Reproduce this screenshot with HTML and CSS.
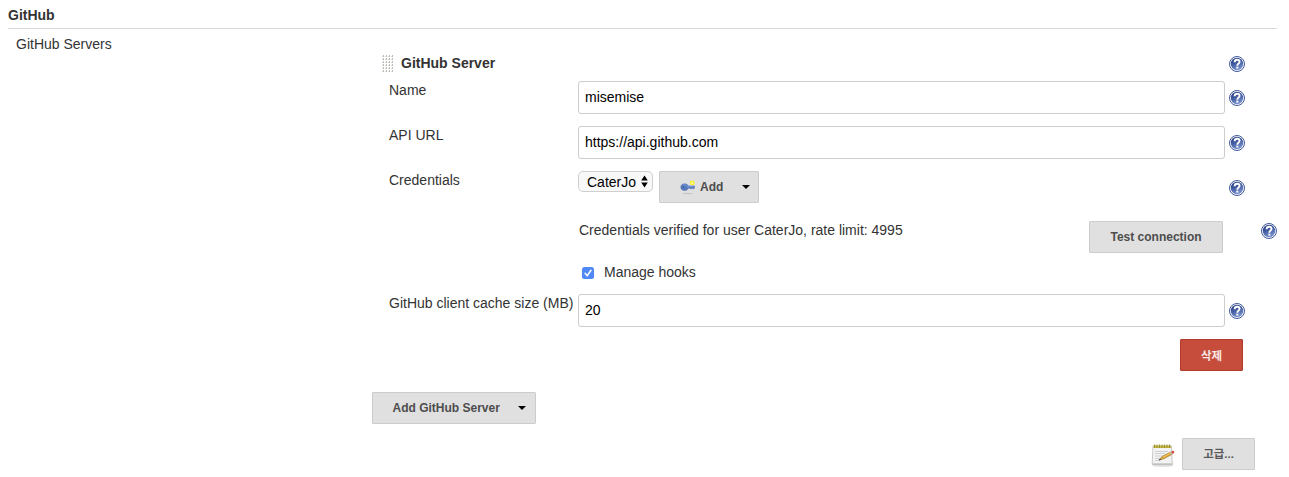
FILE: index.html
```
<!DOCTYPE html>
<html lang="ko">
<head>
<meta charset="utf-8">
<title>GitHub</title>
<link rel="stylesheet" href="styles.css">
</head>
<body>
<svg class="defs" aria-hidden="true">
  <defs>
    <linearGradient id="blue" x1="0" y1="0" x2="0.4" y2="1">
      <stop offset="0" stop-color="#243a7e"/><stop offset="0.5" stop-color="#3f5a9f"/><stop offset="1" stop-color="#7890cc"/>
    </linearGradient>
    <symbol id="help" viewBox="0 0 16 16">
      <circle cx="8" cy="8" r="7.5" fill="#fff" stroke="#40589b" stroke-width="1"/>
      <circle cx="8" cy="8" r="6.2" fill="url(#blue)"/>
      <path d="M5.600 6.200C5.700 4.400 6.700 3.700 8.100 3.700s2.500.8 2.500 2.100c0 1.700-2.300 1.800-2.300 3.900" fill="none" stroke="#fff" stroke-width="1.900"/>
      <rect x="7.300" y="10.600" width="2" height="2" fill="#fff"/>
    </symbol>
  </defs>
</svg>
<main class="page">
  <h1 class="section-title">GitHub</h1>
  <div class="section">
    <div class="section-label">GitHub Servers</div>
    <div class="content">
      <div class="server-head">
        <svg class="grip" viewBox="0 0 12 18">
          <defs><pattern id="dots" width="3" height="3" patternUnits="userSpaceOnUse"><rect y="1" width="2" height="1" fill="#d8d8d4"/><rect x="1" width="1" height="2" fill="#bdbcb6"/></pattern></defs>
          <rect width="12" height="17" fill="url(#dots)"/>
        </svg>
        <b class="server-name">GitHub Server</b>
        <svg class="help"><use href="#help"/></svg>
      </div>
      <div class="row">
        <label class="label">Name</label>
        <input class="text" value="misemise">
        <svg class="help"><use href="#help"/></svg>
      </div>
      <div class="row">
        <label class="label">API URL</label>
        <input class="text" value="https://api.github.com">
        <svg class="help"><use href="#help"/></svg>
      </div>
      <div class="row row-credentials">
        <label class="label">Credentials</label>
        <div class="controls">
          <div class="select">CaterJo
            <svg class="updown" viewBox="0 0 7 13"><path d="M3.500 0.500 6.800 5.500H.2zM.2 7.500h6.600L3.500 12.500z"/></svg>
          </div>
          <button class="button button-add">
            <svg class="key" viewBox="0 0 16 16">
              <ellipse cx="7.500" cy="13.500" rx="5.500" ry=".7" fill="#c8c8c8"/>
              <path d="M4.500 3.800c2 0 3.200.8 3.700 2.100h6.300v2.200l-1.300 1-1-.9-1.200.9-1-.9H8.200c-.5 1.500-1.800 2.300-3.700 2.300C2.200 10.500.8 9.200.8 7.200S2.200 3.800 4.500 3.800z" fill="#587bbf" stroke="#4c6cb0" stroke-width=".5"/>
              <path d="M3 5.200c1.500-.9 3.400-.5 4.200 1.500h6.300" fill="none" stroke="#7d9cd6" stroke-width=".9"/>
              <circle cx="3.200" cy="7.400" r=".8" fill="#3d5a98"/>
              <circle cx="12.300" cy="2.900" r="2.400" fill="#f8f02c"/><circle cx="12.300" cy="2.900" r="1" fill="#fffbb0"/>
            </svg>
            <span>Add</span><i class="caret"></i>
          </button>
        </div>
        <svg class="help"><use href="#help"/></svg>
      </div>
      <div class="row-test">
        <span class="status">Credentials verified for user CaterJo, rate limit: 4995</span>
        <button class="button button-test">Test connection</button>
        <svg class="help"><use href="#help"/></svg>
      </div>
      <div class="row-hooks">
        <svg class="check" viewBox="0 0 12 12"><rect width="12" height="12" rx="2.500" fill="#5089f7"/><path d="M3.100 6.300 5.200 8.700 9 3.300" fill="none" stroke="#fff" stroke-width="1.500" stroke-linecap="round"/></svg>
        <span>Manage hooks</span>
      </div>
      <div class="row">
        <label class="label">GitHub client cache size (MB)</label>
        <input class="text" value="20">
        <svg class="help"><use href="#help"/></svg>
      </div>
      <div class="row-delete"><button class="button button-delete">삭제</button></div>
      <div class="row-add"><button class="button button-server"><span>Add GitHub Server</span><i class="caret"></i></button></div>
      <div class="row-advanced">
        <svg class="notepad" viewBox="0 0 24 24">
          <ellipse cx="12" cy="22.800" rx="10.500" ry="1" fill="#ddd"/>
          <path d="M2 3h18.500l.8 18.500H1.200z" fill="#f3f3f3" stroke="#b5b5b5" stroke-width=".7"/>
          <path d="M1.300 20.300h20v1.500h-20z" fill="#c0c0c0"/>
          <path d="M4 8.500h13M4 10.500h10M4 13h12M4 15.500h7M4 17.500h5" stroke="#d0d0d3" stroke-width="1"/>
          <path d="M2.500 2.500h17.500v2.500H2.500z" fill="#c3b843"/>
          <path d="M3.500 1.500v3.500M6 1.500v3.500M8.500 1.500v3.500M11 1.500v3.500M13.500 1.500v3.500M16 1.500v3.500M18.500 1.500v3.500" stroke="#9c922f" stroke-width="1"/>
          <path d="m8 17 3-3.400 8.500-4.600 1.400 2.400-8.400 4.500z" fill="#dda53a" stroke="#9c7430" stroke-width=".6"/>
          <path d="m12 14.200 8-4.300" stroke="#f3cc66" stroke-width=".9"/>
          <path d="m18.900 9.300 1.300-.8 1.400 2.500-1.300.8z" fill="#b9bbc0"/>
          <path d="m20.100 8.500 1.400-.7c1.500-.3 2.500 1.500 1.400 2.500l-1.400.7z" fill="#d8503f"/>
          <path d="m7.800 17.300 1.300-1.500.9 1.100z" fill="#333"/>
        </svg>
        <button class="button button-advanced">고급...</button>
      </div>
    </div>
  </div>
</main>
</body>
</html>
```
FILE: styles.css
```
* { box-sizing: border-box; }
body {
  margin: 0;
  background: #fff;
  color: #333;
  font: 14px/20px "Liberation Sans", Arial, "Noto Sans CJK KR", sans-serif;
}
svg { display: block; flex: none; }
.defs { position: absolute; width: 0; height: 0; }
.page { height: 477px; padding: 0 0 0 8px; overflow: hidden; }
.section-title {
  width: 1269px;
  height: 29px;
  margin: 0;
  padding-top: 5px;
  border-bottom: 1px solid #d9d9d9;
  font-size: 14px;
  line-height: 20px;
}
.section { display: grid; grid-template-columns: 364px 917px; }
.section-label { padding: 5px 0 0 8px; }
.content { padding-top: 24px; }
.server-head { display: flex; height: 28px; padding-left: 10px; }
.grip { width: 12px; height: 18px; margin: 2px 7px 0 0; }
.server-name { width: 828px; }
.server-head .help { margin-top: 3px; }
.help { width: 16px; height: 16px; }
.row {
  display: grid;
  grid-template-columns: 189px 647px 16px;
  height: 45px;
  padding-left: 17px;
}
.row .help { margin: 9px 0 0 4px; }
.label { margin-top: -1px; white-space: nowrap; }
.text {
  width: 647px;
  height: 33px;
  padding: 0 6px 2px;
  border: 1px solid #ccc;
  border-radius: 3px;
  background: #fff;
  color: #000;
  font: inherit;
  outline: 0;
}
.row-credentials { height: 50px; }
.controls { display: flex; align-items: flex-start; gap: 6px; }
.select {
  display: flex;
  align-items: center;
  justify-content: space-between;
  width: 75px;
  height: 21px;
  padding: 0 4px 0 8px;
  border: 1px solid #cfcfcf;
  border-radius: 5px;
  background: #f8f8f8;
  color: #000;
  line-height: 18px;
}
.updown { width: 7px; height: 13px; }
.button {
  display: flex;
  align-items: center;
  justify-content: center;
  height: 32px;
  padding: 0;
  border: 1px solid #ccc;
  border-radius: 1px;
  background: #e0e0e0;
  color: #4d4d4d;
  font: bold 12px/16px "Liberation Sans", Arial, "Noto Sans CJK KR", sans-serif;
  white-space: nowrap;
}
.button-add { width: 100px; justify-content: flex-start; padding-left: 20px; }
.key { width: 16px; height: 16px; margin: 2px 4px 0 0; }
.caret { border: 4px solid transparent; border-top-color: #000; border-bottom: 0; }
.button-add .caret { margin-left: 19px; }
.row-test { display: flex; height: 41px; padding-left: 207px; }
.status { width: 510px; margin-top: -1px; }
.button-test { width: 134px; }
.row-test .help { margin: 2px 0 0 38px; }
.row-hooks { display: flex; height: 32px; padding-left: 210px; }
.check { width: 12px; height: 12px; margin: 5px 10px 0 0; }
.row-delete { display: flex; height: 53px; padding-left: 808px; }
.button-delete {
  width: 63px;
  padding-top: 1px;
  border-color: #b03a2b;
  background: #c64d3c;
  color: #f8e8e5;
  font-size: 11.5px;
}
.row-add { height: 46px; }
.button-server { width: 164px; justify-content: flex-start; padding-left: 19.5px; }
.button-server .caret { margin-left: 18.500px; }
.row-advanced { display: flex; padding-left: 779px; }
.notepad { width: 24px; height: 24px; margin: 5px 7px 0 0; }
.button-advanced { width: 73px; font-size: 11.5px; color: #5a5a5a; }
```
